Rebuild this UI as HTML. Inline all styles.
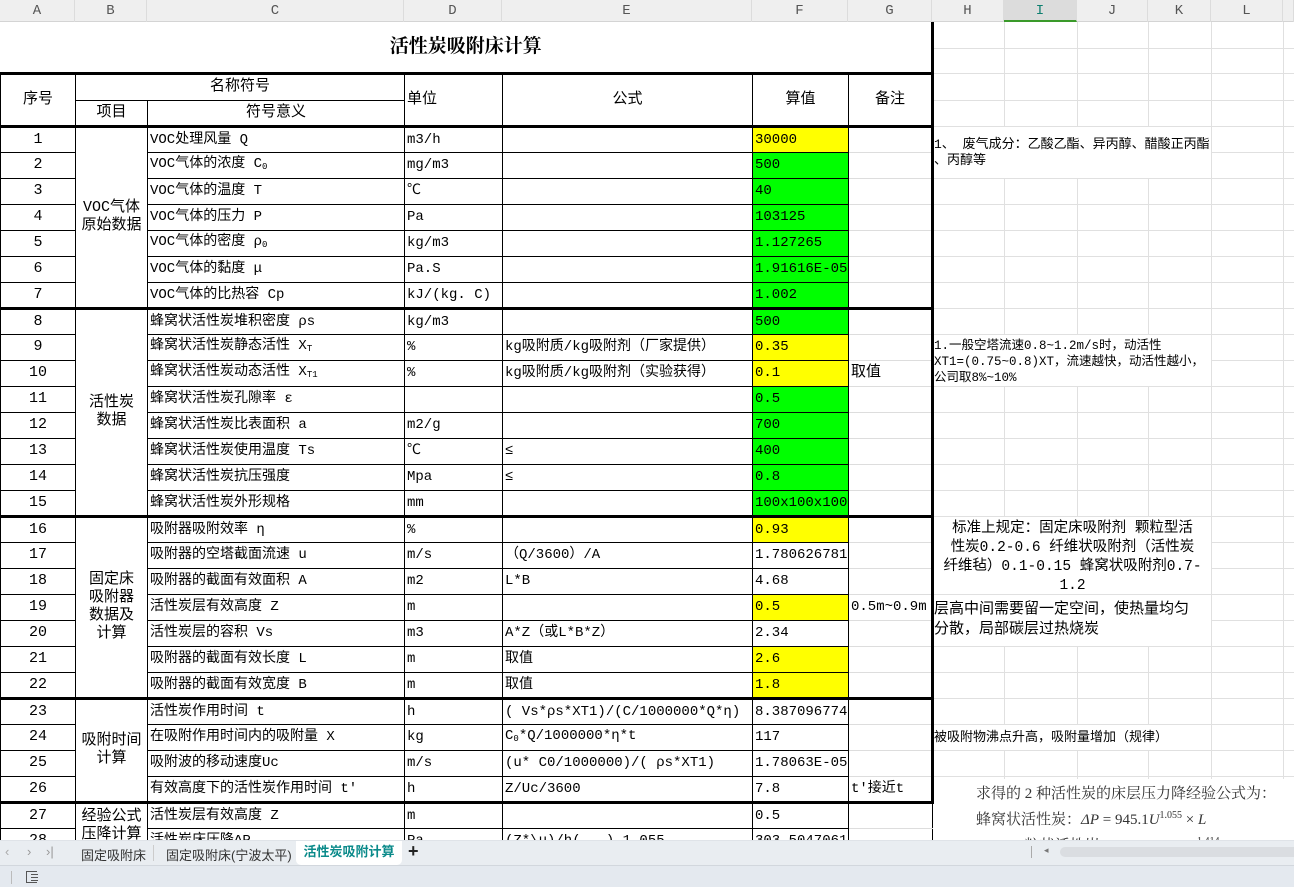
<!DOCTYPE html>
<html><head><meta charset="utf-8"><style>
*{margin:0;padding:0;box-sizing:border-box}
body{width:1294px;height:887px;overflow:hidden;background:#fff;position:relative;font-family:"Liberation Mono","Noto Sans CJK SC",monospace;font-size:14px;color:#000}
#colh{position:absolute;left:0;top:0;width:1294px;height:22px;background:#efefef;border-bottom:1px solid #d4d4d4}
#colh div{position:absolute;top:0;height:22px;line-height:22px;text-align:center;color:#555;font-family:"Liberation Mono",monospace;font-size:14px;border-right:1px solid #dcdcdc}
#right{position:absolute;left:932px;top:22px;width:362px;height:760px;background-color:#fff;
background-image:linear-gradient(#fff,#fff);}
.vl{position:absolute;width:1px;background:#e0e0e0;top:22px;height:758px}
.hl{position:absolute;height:1px;background:#e0e0e0;left:932px;width:362px}
table{position:absolute;left:0;top:22px;border-collapse:collapse;table-layout:fixed;width:932px;background:#fff}
td{border:1px solid #000;height:26px;padding:0 2px;white-space:nowrap;overflow:hidden;vertical-align:middle;font-size:14px;line-height:16px}
td.c{text-align:center}
td.n{text-align:center;font-size:15px}
td.g{border-top:1px solid #ddd;border-bottom:1px solid #ddd;border-right:3px solid #000}
tr.t td{border-top:3px solid #000}
.y{background:#ffff00}.gr{background:#00ff00}
sub{font-size:9px;vertical-align:-2px}
.note{position:absolute;background:#fff;font-size:13px;line-height:16px;white-space:nowrap}
</style></head><body>
<div id="colh">
<div style="left:0;width:75px">A</div><div style="left:75px;width:72px">B</div><div style="left:147px;width:257px">C</div><div style="left:404px;width:98px">D</div><div style="left:502px;width:250px">E</div><div style="left:752px;width:96px">F</div><div style="left:848px;width:84px">G</div><div style="left:932px;width:72px">H</div><div style="left:1004px;width:73px;background:#dcdcdc;color:#0d7f6f;border-bottom:2px solid #3a9a2a">I</div><div style="left:1077px;width:71px">J</div><div style="left:1148px;width:63px">K</div><div style="left:1211px;width:72px">L</div><div style="left:1283px;width:11px"></div>
</div>
<div class="vl" style="left:1004px"></div><div class="vl" style="left:1077px"></div><div class="vl" style="left:1148px"></div><div class="vl" style="left:1211px"></div><div class="vl" style="left:1283px"></div>
<div class="hl" style="top:48px"></div><div class="hl" style="top:73px"></div><div class="hl" style="top:100px"></div><div class="hl" style="top:126px"></div>
<div class="hl" style="top:152px"></div><div class="hl" style="top:178px"></div><div class="hl" style="top:204px"></div><div class="hl" style="top:230px"></div><div class="hl" style="top:256px"></div><div class="hl" style="top:282px"></div><div class="hl" style="top:308px"></div><div class="hl" style="top:334px"></div><div class="hl" style="top:360px"></div><div class="hl" style="top:386px"></div><div class="hl" style="top:412px"></div><div class="hl" style="top:438px"></div><div class="hl" style="top:464px"></div><div class="hl" style="top:490px"></div><div class="hl" style="top:516px"></div><div class="hl" style="top:542px"></div><div class="hl" style="top:568px"></div><div class="hl" style="top:594px"></div><div class="hl" style="top:620px"></div><div class="hl" style="top:646px"></div><div class="hl" style="top:672px"></div><div class="hl" style="top:698px"></div><div class="hl" style="top:724px"></div><div class="hl" style="top:750px"></div><div class="hl" style="top:776px"></div>

<div class="note" style="left:934px;top:127px;width:277px;height:51px;padding-top:10px">1、 废气成分：乙酸乙酯、异丙醇、醋酸正丙酯<br>、丙醇等</div>
<div class="note" style="left:934px;top:335px;width:277px;height:51px;padding-top:3px;font-size:12.5px">1.一般空塔流速0.8~1.2m/s时，动活性<br>XT1=(0.75~0.8)XT，流速越快，动活性越小，<br>公司取8%~10%</div>
<div class="note" style="left:934px;top:517px;width:277px;height:77px;padding-top:3px;font-size:14.5px;line-height:19px;text-align:center">标准上规定：固定床吸附剂 颗粒型活<br>性炭0.2-0.6  纤维状吸附剂（活性炭<br>纤维毡）0.1-0.15  蜂窝状吸附剂0.7-<br>1.2</div>
<div class="note" style="left:934px;top:595px;width:277px;height:51px;padding-top:5px;font-size:15px;line-height:20px">层高中间需要留一定空间，使热量均匀<br>分散，局部碳层过热烧炭</div>
<div class="note" style="left:934px;top:725px;width:277px;height:25px;padding-top:5px">被吸附物沸点升高，吸附量增加（规律）</div>
<div class="note" style="left:932px;top:779px;width:362px;height:61px;padding:5px 0 0 44px;font-family:'Liberation Serif','Noto Serif CJK SC',serif;font-size:15px;line-height:21px;color:#333">求得的 2 种活性炭的床层压力降经验公式为：<br>蜂窝状活性炭：<i>ΔP</i> = 945.1<i>U</i><sup style="font-size:10px">1.055</sup> × <i>L</i><br>ZJ－30 粒状活性炭：<i>ΔP</i> = 12443<i>U</i><sup style="font-size:10px">1.414</sup> × <i>L</i></div>

<table>
<colgroup><col style="width:75px"><col style="width:72px"><col style="width:257px"><col style="width:98px"><col style="width:250px"><col style="width:96px"><col style="width:84px"></colgroup>
<tr><td colspan="7" style="height:51px;border:none;border-right:3px solid #000;text-align:center;font-family:'Liberation Serif','Noto Serif CJK SC',serif;font-weight:bold;font-size:19px">活性炭吸附床计算</td></tr>
<tr class="t"><td rowspan="2" class="c" style="font-size:15px">序号</td><td colspan="2" class="c" style="height:27px;font-size:15px">名称符号</td><td rowspan="2" style="font-size:15px">单位</td><td rowspan="2" class="c" style="font-size:15px">公式</td><td rowspan="2" class="c" style="font-size:15px">算值</td><td rowspan="2" class="c" style="border-right:3px solid #000;font-size:15px">备注</td></tr>
<tr><td class="c" style="font-size:15px">项目</td><td class="c" style="font-size:15px">符号意义</td></tr>
<tr class="t"><td class="n">1</td><td rowspan="7" class="c" style="white-space:normal;line-height:18px;font-size:15px">VOC气体原始数据</td><td>VOC处理风量 Q</td><td>m3/h</td><td></td><td class="y">30000</td><td class="g" style="border-top:3px solid #000"></td></tr>
<tr><td class="n">2</td><td>VOC气体的浓度 C<sub>0</sub></td><td>mg/m3</td><td></td><td class="gr">500</td><td class="g"></td></tr>
<tr><td class="n">3</td><td>VOC气体的温度 T</td><td>℃</td><td></td><td class="gr">40</td><td class="g"></td></tr>
<tr><td class="n">4</td><td>VOC气体的压力 P</td><td>Pa</td><td></td><td class="gr">103125</td><td class="g"></td></tr>
<tr><td class="n">5</td><td>VOC气体的密度 ρ<sub>0</sub></td><td>kg/m3</td><td></td><td class="gr">1.127265</td><td class="g"></td></tr>
<tr><td class="n">6</td><td>VOC气体的黏度 μ</td><td>Pa.S</td><td></td><td class="gr">1.91616E-05</td><td class="g"></td></tr>
<tr><td class="n">7</td><td>VOC气体的比热容 Cp</td><td>kJ/(kg. C)</td><td></td><td class="gr">1.002</td><td class="g"></td></tr>
<tr class="t"><td class="n">8</td><td rowspan="8" class="c" style="font-size:15px;line-height:18px">活性炭<br>数据</td><td>蜂窝状活性炭堆积密度 ρs</td><td>kg/m3</td><td></td><td class="gr">500</td><td class="g" style="border-top:3px solid #000"></td></tr>
<tr><td class="n">9</td><td>蜂窝状活性炭静态活性 X<sub>T</sub></td><td>%</td><td>kg吸附质/kg吸附剂（厂家提供）</td><td class="y">0.35</td><td class="g"></td></tr>
<tr><td class="n">10</td><td>蜂窝状活性炭动态活性 X<sub>T1</sub></td><td>%</td><td>kg吸附质/kg吸附剂（实验获得）</td><td class="y">0.1</td><td class="g" style="font-size:15px">取值</td></tr>
<tr><td class="n">11</td><td>蜂窝状活性炭孔隙率 ε</td><td></td><td></td><td class="gr">0.5</td><td class="g"></td></tr>
<tr><td class="n">12</td><td>蜂窝状活性炭比表面积 a</td><td>m2/g</td><td></td><td class="gr">700</td><td class="g"></td></tr>
<tr><td class="n">13</td><td>蜂窝状活性炭使用温度 Ts</td><td>℃</td><td>≤</td><td class="gr">400</td><td class="g"></td></tr>
<tr><td class="n">14</td><td>蜂窝状活性炭抗压强度</td><td>Mpa</td><td>≤</td><td class="gr">0.8</td><td class="g"></td></tr>
<tr><td class="n">15</td><td>蜂窝状活性炭外形规格</td><td>mm</td><td></td><td class="gr">100x100x100</td><td class="g"></td></tr>
<tr class="t"><td class="n">16</td><td rowspan="7" class="c" style="font-size:15px;line-height:18px">固定床<br>吸附器<br>数据及<br>计算</td><td>吸附器吸附效率 η</td><td>%</td><td></td><td class="y">0.93</td><td class="g" style="border-top:3px solid #000"></td></tr>
<tr><td class="n">17</td><td>吸附器的空塔截面流速 u</td><td>m/s</td><td> （Q/3600）/A</td><td>1.780626781</td><td class="g"></td></tr>
<tr><td class="n">18</td><td>吸附器的截面有效面积 A</td><td>m2</td><td>L*B</td><td>4.68</td><td class="g"></td></tr>
<tr><td class="n">19</td><td>活性炭层有效高度 Z</td><td>m</td><td></td><td class="y">0.5</td><td class="g">0.5m~0.9m</td></tr>
<tr><td class="n">20</td><td>活性炭层的容积 Vs</td><td>m3</td><td>A*Z（或L*B*Z）</td><td>2.34</td><td class="g"></td></tr>
<tr><td class="n">21</td><td>吸附器的截面有效长度 L</td><td>m</td><td>取值</td><td class="y">2.6</td><td class="g"></td></tr>
<tr><td class="n">22</td><td>吸附器的截面有效宽度 B</td><td>m</td><td>取值</td><td class="y">1.8</td><td class="g"></td></tr>
<tr class="t"><td class="n">23</td><td rowspan="4" class="c" style="font-size:15px;line-height:18px">吸附时间<br>计算</td><td>活性炭作用时间 t</td><td>h</td><td>( Vs*ρs*XT1)/(C/1000000*Q*η)</td><td>8.387096774</td><td class="g" style="border-top:3px solid #000"></td></tr>
<tr><td class="n">24</td><td>在吸附作用时间内的吸附量 X</td><td>kg</td><td>C<sub>0</sub>*Q/1000000*η*t</td><td>117</td><td class="g"></td></tr>
<tr><td class="n">25</td><td>吸附波的移动速度Uc</td><td>m/s</td><td>(u* C0/1000000)/( ρs*XT1)</td><td>1.78063E-05</td><td class="g"></td></tr>
<tr><td class="n">26</td><td>有效高度下的活性炭作用时间 t'</td><td>h</td><td>Z/Uc/3600</td><td>7.8</td><td class="g" style="border-bottom:3px solid #000">t'接近t</td></tr>
<tr class="t"><td class="n">27</td><td rowspan="2" class="c" style="font-size:15px;line-height:18px;vertical-align:top;padding-top:4px">经验公式<br>压降计算</td><td>活性炭层有效高度 Z</td><td>m</td><td></td><td>0.5</td><td class="g" style="border-right:1px solid #000;border-top:3px solid #000"></td></tr>
<tr><td class="n">28</td><td>活性炭床压降ΔP</td><td>Pa</td><td>(Z*\u)/h(...)       1.055</td><td>303.5047061</td><td class="g" style="border-right:1px solid #000"></td></tr>
</table>

<div style="position:absolute;left:0;top:840px;width:1294px;height:25px;background:#e9edf1;border-top:1px solid #dfe3e8;font-family:'Liberation Sans','Noto Sans CJK SC',sans-serif;font-size:13px;color:#333">
<span style="position:absolute;left:5px;top:3px;color:#aaa">‹</span><span style="position:absolute;left:27px;top:3px;color:#999">›</span><span style="position:absolute;left:46px;top:3px;color:#999">›|</span>
<span style="position:absolute;left:81px;top:4px">固定吸附床</span>
<span style="position:absolute;left:153px;top:4px;width:1px;height:16px;background:#ccc"></span>
<span style="position:absolute;left:166px;top:4px">固定吸附床(宁波太平)</span>
<div style="position:absolute;left:296px;top:0;width:106px;height:24px;background:#fff;border-radius:0 0 5px 5px;color:#0a8a8a;text-align:center;line-height:22px;font-weight:bold">活性炭吸附计算</div>
<span style="position:absolute;left:408px;top:0;font-size:18px;font-weight:bold;color:#222">+</span>
<span style="position:absolute;left:1031px;top:5px;width:1px;height:12px;background:#aaa"></span>
<span style="position:absolute;left:1044px;top:4px;font-size:9px;color:#777">◂</span>
<div style="position:absolute;left:1060px;top:6px;width:240px;height:10px;border-radius:5px;background:#dadde1"></div>
</div>
<div style="position:absolute;left:0;top:865px;width:1294px;height:22px;background:#e4e9ef;border-top:1px solid #d2d7dd">
<span style="position:absolute;left:11px;top:5px;width:1px;height:13px;background:#bbb"></span>
<div style="position:absolute;left:26px;top:5px;width:11px;height:12px;border:1.5px solid #555;border-right:none"></div>
<div style="position:absolute;left:31px;top:8px;width:7px;height:1px;background:#555;box-shadow:0 3px 0 #555,0 6px 0 #555"></div>
</div>
</body></html>
